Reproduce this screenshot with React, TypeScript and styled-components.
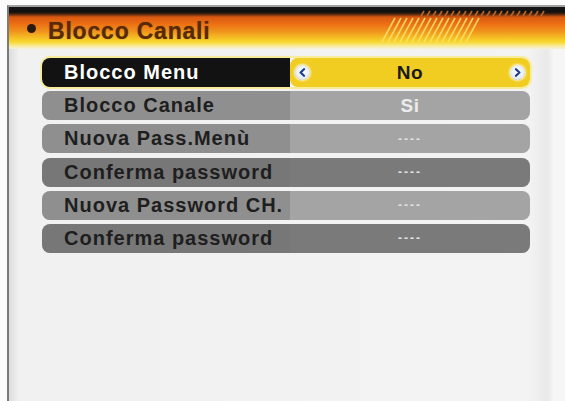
import React from 'react';
import styled, { createGlobalStyle } from 'styled-components';

const GlobalStyle = createGlobalStyle`
  html, body {
    margin: 0;
    padding: 0;
    background: #fbfbfb;
  }
`;

type Tone = 'active' | 'light' | 'dark';

interface Item {
  label: string
  value: string
  tone: Tone
  dashes?: boolean
}

const items: Item[] = [
  { label: 'Blocco Menu', value: 'No', tone: 'active' },
  { label: 'Blocco Canale', value: 'Si', tone: 'light' },
  { label: 'Nuova Pass.Menù', value: '----', tone: 'light', dashes: true },
  { label: 'Conferma password', value: '----', tone: 'dark', dashes: true },
  { label: 'Nuova Password CH.', value: '----', tone: 'light', dashes: true },
  { label: 'Conferma password', value: '----', tone: 'dark', dashes: true },
];

const labelBg: Record<Tone, string> = {
  active: '#121212',
  light: '#8f8f8f',
  dark: '#777777',
};

const valueBg: Record<Tone, string> = {
  active: '#f1cd22',
  light: '#a4a4a4',
  dark: '#7a7a7a',
};

const Screen = styled.div`
  width: 565px;
  height: 401px;
  box-sizing: border-box;
  padding: 5px 0 0 7px;
  overflow: hidden;
  font-family: 'Liberation Sans', Arial, sans-serif;
`;

const Frame = styled.div`
  height: 100%;
  box-sizing: border-box;
  border-left: 2px solid #7a7a7a;
  border-top: 2px solid #a0a0a0;
  background: linear-gradient(to right, #dcdcdc 0, #f1f1f1 10px, #f3f3f3 520px, #e9e9e9 538px, #f6f6f6 545px);
`;

const Header = styled.div`
  position: relative;
  height: 42px;
  display: flex;
  align-items: center;
  gap: 12px;
  padding: 6px 0 0 18px;
  box-sizing: border-box;
  background: linear-gradient(
    to bottom,
    #151515 0,
    #101010 5px,
    #4a2410 7px,
    #d85810 10px,
    #ec7014 17px,
    #f0921c 24px,
    #f5c024 31px,
    #f7d830 35px,
    #f8ec9c 39px,
    #f5f1de 42px
  );
`;

const Bullet = styled.span`
  width: 9px;
  height: 9px;
  border-radius: 50%;
  background: #2a1a10;
  margin-top: -6px;
`;

const Title = styled.h1`
  margin: 0;
  font-size: 23px;
  font-weight: bold;
  letter-spacing: 0.8px;
  color: #5a2a08;
  line-height: 1;
  text-shadow: 0 0 1px rgba(90, 42, 8, 0.6);
`;

const Stripes = styled.svg`
  position: absolute;
  left: 360px;
  top: 2px;
`;

const List = styled.div`
  display: flex;
  flex-direction: column;
  gap: 4.2px;
  padding: 9px 0 0 33px;
  width: 488px;
`;

const Row = styled.div<{ $tone: Tone }>`
  display: grid;
  grid-template-columns: 248px 1fr;
  height: 29px;
  border-radius: 8px;
  overflow: hidden;
  box-shadow: ${(p) => (p.$tone === 'active' ? '0 0 0 2px #f6ec9a' : 'inset 0 -2px 2px rgba(0, 0, 0, 0.18)')};
`;

const Label = styled.div<{ $tone: Tone }>`
  display: flex;
  align-items: center;
  padding-left: 22px;
  background: ${(p) => labelBg[p.$tone]};
  color: ${(p) => (p.$tone === 'active' ? '#ffffff' : '#1e1e1e')};
  font-size: 20px;
  font-weight: bold;
  letter-spacing: 1px;
  white-space: nowrap;
`;

const Value = styled.div<{ $tone: Tone }>`
  display: flex;
  align-items: center;
  justify-content: space-between;
  padding: 0 5px;
  background: ${(p) => valueBg[p.$tone]};
  border-radius: ${(p) => (p.$tone === 'active' ? '8px' : '0')};
  color: ${(p) => (p.$tone === 'active' ? '#1a1a1a' : '#ececec')};
  font-weight: bold;
`;

const ValueText = styled.span<{ $dashes?: boolean }>`
  flex: 1;
  text-align: center;
  font-size: ${(p) => (p.$dashes ? '12px' : '19px')};
  letter-spacing: ${(p) => (p.$dashes ? '2px' : '0.5px')};
  color: ${(p) => (p.$dashes ? '#e2e2e2' : 'inherit')};
`;

const ArrowDisc = styled.span`
  width: 15px;
  height: 15px;
  border-radius: 50%;
  background: radial-gradient(circle at 50% 45%, #ffffff 0, #e8eef8 55%, #b8c6dc 100%);
  display: flex;
  align-items: center;
  justify-content: center;
  box-shadow: 0 0 2px 1px rgba(255, 255, 240, 0.8);
`;

function Arrow({ dir }: { dir: 'left' | 'right' }) {
  return (
    <ArrowDisc>
      <svg width="9" height="9" viewBox="0 0 9 9">
        <path
          d={dir === 'left' ? 'M6 1.2 L2.6 4.5 L6 7.8' : 'M3 1.2 L6.4 4.5 L3 7.8'}
          fill="none"
          stroke="#1d3d8c"
          strokeWidth="2.2"
          strokeLinecap="round"
          strokeLinejoin="round"
        />
      </svg>
    </ArrowDisc>
  );
}

function HeaderStripes() {
  const slash = Array.from({ length: 15 }, (_, i) => i);
  const ticks = Array.from({ length: 21 }, (_, i) => i);
  return (
    <Stripes width="200" height="36" viewBox="0 0 200 36">
      {ticks.map((i) => (
        <line key={`t${i}`} x1={52 + i * 6} y1={7} x2={55 + i * 6} y2={2} stroke="#b8662a" strokeWidth="1.6" />
      ))}
      {slash.map((i) => (
        <line key={`s${i}`} x1={13 + i * 6} y1={33} x2={26 + i * 6} y2={9} stroke="#fbe36a" strokeWidth="1.6" opacity={0.85} />
      ))}
    </Stripes>
  );
}

function App() {
  return (
    <Screen>
      <GlobalStyle />
      <Frame>
        <Header>
          <Bullet />
          <Title>Blocco Canali</Title>
          <HeaderStripes />
        </Header>
        <List>
          {items.map((item, i) => (
            <Row key={i} $tone={item.tone}>
              <Label $tone={item.tone}>{item.label}</Label>
              <Value $tone={item.tone}>
                {item.tone === 'active' && <Arrow dir="left" />}
                <ValueText $dashes={item.dashes}>{item.value}</ValueText>
                {item.tone === 'active' && <Arrow dir="right" />}
              </Value>
            </Row>
          ))}
        </List>
      </Frame>
    </Screen>
  );
}

export default App;
